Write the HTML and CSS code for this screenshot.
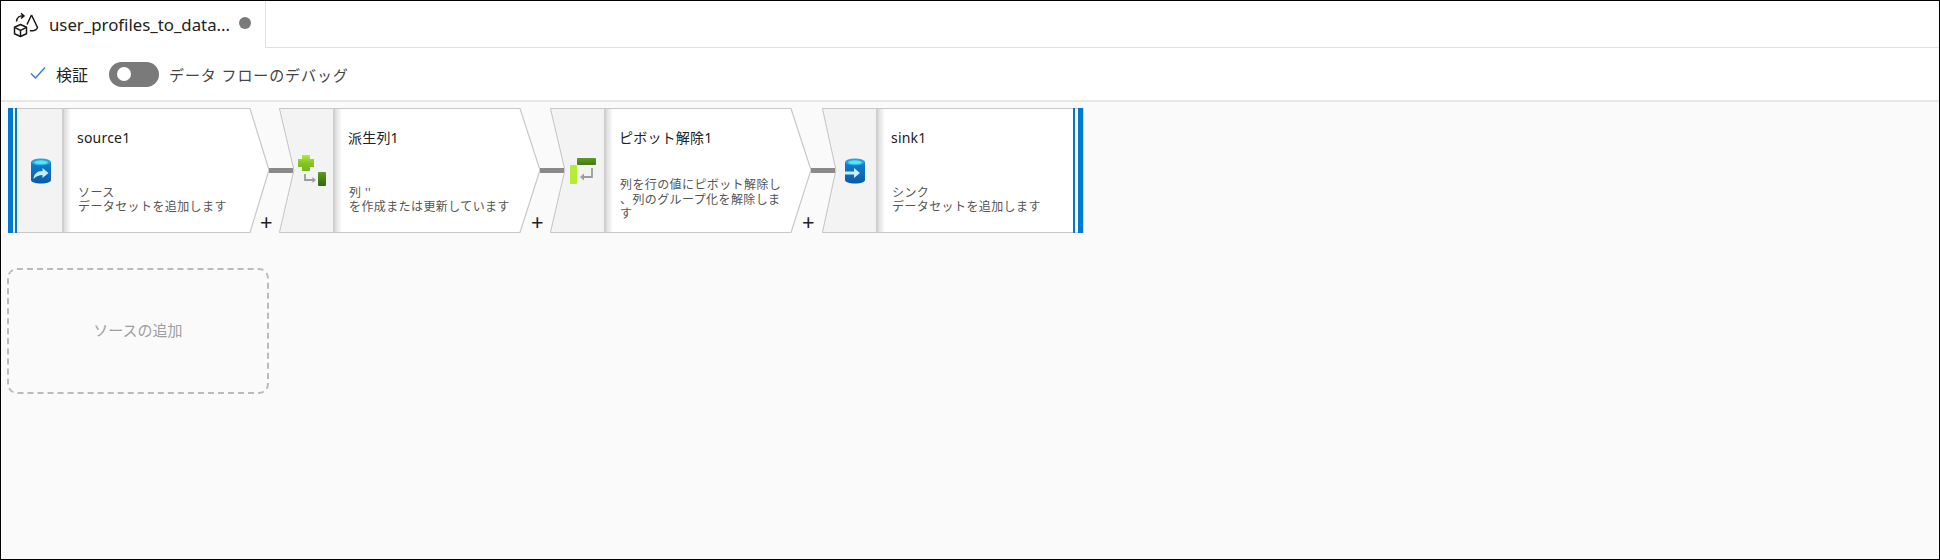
FILE: index.html
```html
<!DOCTYPE html>
<html lang="ja">

<head>
    <meta charset="UTF-8">
    <title>user_profiles_to_data</title>
    <link rel="stylesheet" href="styles.css">
</head>

<body>
    <div class="frame">
        <div class="tabbar">
            <div class="tab">
                <svg class="tab-icon" width="26" height="26" viewBox="0 0 26 26" fill="none" stroke="#1d1815" stroke-width="1.5">
                    <path d="M7.500 12.500l6 2.800v6.400l-6 2.800-6-2.800v-6.400z" stroke-linejoin="round"/>
                    <path d="M1.500 15.300l6 3 6-3M7.500 18.300v6.400"/>
                    <path d="M18.500 3l6 12.500c-1 2.500-3 3.200-5 3.200h-2.600M18.500 3l-4.500 9.500"/>
                    <path d="M3.500 9.500c.4-3.600 3-6 7-5.600M8 1.200l3 2.700-3 2.600"/>
                </svg>
                <span class="tab-title">user_profiles_to_data...</span>
                <span class="tab-dot"></span>
            </div>
            <div class="tab-rest"></div>
        </div>

        <div class="toolbar">
            <svg class="check" width="16" height="14" viewBox="0 0 16 14" fill="none" stroke="#2f78d0" stroke-width="1.3">
                <path d="M1 7.500l4.500 4.500L15 1.500"/>
            </svg>
            <span class="validate">検証</span>
            <span class="toggle"><span class="knob"></span></span>
            <span class="debug">データ フローのデバッグ</span>
        </div>

        <div class="canvas">
            <div class="pipeline">
                <div class="node node-first">
                    <svg class="shape" width="262" height="125" viewBox="0 0 262 125">
                        <polygon points="0.5,0.5 242,0.5 261,62 242,124.5 0.5,124.5" fill="#fff" stroke="#c8c8c8" stroke-width="1.2"/>
                        <polygon points="1,1 54,1 54,124 1,124" fill="#f3f3f3"/>
                        <rect x="54" y="1" width="2" height="123" fill="#cfcfcf"/>
                        <rect x="0" y="0" width="5" height="125" fill="#0078d4"/>
                        <rect x="7" y="0" width="2" height="125" fill="#0078d4"/>
                    </svg>
                    <div class="strip">
                        <svg width="22" height="26" viewBox="0 0 22 26">
                            <path d="M1 4v18c0 2 4.500 3.500 10 3.500s10-1.500 10-3.500V4z" fill="url(#db1)"/>
                            <ellipse cx="11" cy="4" rx="10" ry="3.500" fill="#2a9fd8"/>
                            <ellipse cx="11" cy="4.300" rx="7" ry="2" fill="#50e6ff"/>
                            <path d="M3.500 21c.3-5 3.500-8 9-8V10l6 5-6 5v-3c-3.500 0-6 1-9 4z" fill="#c8eefc"/>
                            <defs>
                                <linearGradient id="db1" x1="0" y1="0" x2="0" y2="1">
                                    <stop offset="0" stop-color="#0f7fd6"/>
                                    <stop offset="1" stop-color="#0a5ba8"/>
                                </linearGradient>
                            </defs>
                        </svg>
                    </div>
                    <div class="body">
                        <div class="title">source1</div>
                        <div class="desc">ソース<br>データセットを追加します</div>
                    </div>
                    <span class="link"></span>
                    <span class="plus">+</span>
                </div>

                <div class="node">
                    <svg class="shape" width="262" height="125" viewBox="0 0 262 125">
                        <polygon points="0.5,0.5 241,0.5 261,62 241,124.5 0.5,124.5 15,62" fill="#fff" stroke="#c8c8c8" stroke-width="1.2"/>
                        <polygon points="1.500,1 54,1 54,124 1.500,124 16,62" fill="#f3f3f3"/>
                        <rect x="54" y="1" width="2" height="123" fill="#cfcfcf"/>
                    </svg>
                    <div class="strip">
                        <svg width="30" height="32" viewBox="0 0 30 32">
                            <path d="M5 0h8v4h4v8h-4v4H5v-4H1V4h4z" fill="url(#plus1)"/>
                            <rect x="21" y="17" width="8" height="14" rx="1" fill="url(#col1)"/>
                            <path d="M8 19v6h9" fill="none" stroke="#9c9c9c" stroke-width="1.800"/>
                            <path d="M15.500 22l3.500 3-3.500 3z" fill="#9c9c9c"/>
                            <defs>
                                <linearGradient id="plus1" x1="0" y1="0" x2="0" y2="1">
                                    <stop offset="0" stop-color="#b4ec36"/>
                                    <stop offset="0.500" stop-color="#86c522"/>
                                    <stop offset="1" stop-color="#74b81c"/>
                                </linearGradient>
                                <linearGradient id="col1" x1="0" y1="0" x2="0" y2="1">
                                    <stop offset="0" stop-color="#5e9a24"/>
                                    <stop offset="1" stop-color="#2f6a10"/>
                                </linearGradient>
                            </defs>
                        </svg>
                    </div>
                    <div class="body">
                        <div class="title">派生列1</div>
                        <div class="desc">列 ''<br>を作成または更新しています</div>
                    </div>
                    <span class="link"></span>
                    <span class="plus">+</span>
                </div>

                <div class="node">
                    <svg class="shape" width="262" height="125" viewBox="0 0 262 125">
                        <polygon points="0.5,0.5 241,0.5 261,62 241,124.5 0.5,124.5 15,62" fill="#fff" stroke="#c8c8c8" stroke-width="1.2"/>
                        <polygon points="1.500,1 54,1 54,124 1.500,124 16,62" fill="#f3f3f3"/>
                        <rect x="54" y="1" width="2" height="123" fill="#cfcfcf"/>
                    </svg>
                    <div class="strip">
                        <svg width="26" height="26" viewBox="0 0 26 26">
                            <rect x="7" y="0" width="19" height="7" rx="1" fill="url(#bar1)"/>
                            <rect x="0" y="7" width="7" height="19" rx="1" fill="#b4ec36"/>
                            <path d="M22 10v9H12" fill="none" stroke="#9c9c9c" stroke-width="1.800"/>
                            <path d="M14 15.500l-4 3.500 4 3.500z" fill="#9c9c9c"/>
                            <defs>
                                <linearGradient id="bar1" x1="0" y1="0" x2="0" y2="1">
                                    <stop offset="0" stop-color="#5e9a24"/>
                                    <stop offset="1" stop-color="#3f7a15"/>
                                </linearGradient>
                            </defs>
                        </svg>
                    </div>
                    <div class="body">
                        <div class="title">ピボット解除1</div>
                        <div class="desc">列を行の値にピボット解除し<br>、列のグループ化を解除しま<br>す</div>
                    </div>
                    <span class="link"></span>
                    <span class="plus">+</span>
                </div>

                <div class="node node-last">
                    <svg class="shape" width="262" height="125" viewBox="0 0 262 125">
                        <polygon points="0.5,0.5 261,0.5 261,124.5 0.5,124.5 14,62" fill="#fff" stroke="#c8c8c8" stroke-width="1.2"/>
                        <polygon points="1.500,1 54,1 54,124 1.500,124 15,62" fill="#f3f3f3"/>
                        <rect x="54" y="1" width="2" height="123" fill="#cfcfcf"/>
                        <rect x="251" y="0" width="2" height="125" fill="#0078d4"/>
                        <rect x="256" y="0" width="5" height="125" fill="#0078d4"/>
                    </svg>
                    <div class="strip">
                        <svg width="22" height="26" viewBox="0 0 22 26">
                            <path d="M1 4v18c0 2 4.500 3.500 10 3.500s10-1.500 10-3.500V4z" fill="url(#db2)"/>
                            <ellipse cx="11" cy="4" rx="10" ry="3.500" fill="#2a9fd8"/>
                            <ellipse cx="11" cy="4.300" rx="7" ry="2" fill="#50e6ff"/>
                            <path d="M1 13.500h9V10l6 5-6 5v-3.500H1z" fill="#c8eefc"/>
                            <defs>
                                <linearGradient id="db2" x1="0" y1="0" x2="0" y2="1">
                                    <stop offset="0" stop-color="#0f7fd6"/>
                                    <stop offset="1" stop-color="#0a5ba8"/>
                                </linearGradient>
                            </defs>
                        </svg>
                    </div>
                    <div class="body">
                        <div class="title">sink1</div>
                        <div class="desc">シンク<br>データセットを追加します</div>
                    </div>
                </div>
            </div>

            <div class="add-source">ソースの追加</div>
        </div>
    </div>
</body>

</html>
```

FILE: styles.css
```css
html,
body {
    margin: 0;
    padding: 0;
}

body {
    font-family: "Noto Sans", "Noto Sans CJK JP", sans-serif;
    color: #222;
}

.frame {
    width: 1940px;
    height: 560px;
    box-sizing: border-box;
    border: 1px solid #000;
    display: flex;
    flex-direction: column;
    overflow: hidden;
    background-color: #fff;
}

.tabbar {
    display: flex;
    height: 47px;
}

.tab {
    width: 265px;
    box-sizing: border-box;
    display: flex;
    align-items: center;
    padding-left: 12px;
    border-right: 1px solid #e0e0e0;
}

.tab-icon {
    flex: none;
}

.tab-title {
    margin-left: 10px;
    font-size: 16.8px;
    white-space: nowrap;
}

.tab-dot {
    width: 12px;
    height: 12px;
    margin-left: 9px;
    margin-top: -3px;
    border-radius: 50%;
    background-color: #7a7a7a;
}

.tab-rest {
    flex: 1;
    border-bottom: 1px solid #e0e0e0;
}

.toolbar {
    height: 54px;
    box-sizing: border-box;
    display: flex;
    align-items: center;
    padding-left: 29px;
    border-bottom: 2px solid #e6e6e6;
}

.check {
    margin-top: -2px;
}

.validate {
    margin-left: 10px;
    font-size: 16px;
}

.toggle {
    width: 50px;
    height: 25px;
    margin-left: 21px;
    display: flex;
    align-items: center;
    padding-left: 8px;
    box-sizing: border-box;
    border-radius: 13px;
    background-color: #7a7a7a;
}

.knob {
    width: 14px;
    height: 14px;
    border-radius: 50%;
    background-color: #fff;
}

.debug {
    margin-left: 10px;
    font-size: 15px;
    letter-spacing: 0.9px;
    color: #444;
}

.canvas {
    flex: 1;
    background-color: #fafafa;
    padding: 6px 0 0 7px;
}

.pipeline {
    display: flex;
    height: 125px;
}

.node {
    position: relative;
    z-index: 0;
    width: 271px;
    height: 125px;
    display: flex;
    flex: none;
}

.node:nth-child(3) {
    width: 272px;
}

.node-last {
    width: 262px;
}

.shape {
    position: absolute;
    left: 0;
    top: 0;
    z-index: -1;
}

.strip {
    width: 56px;
    box-sizing: border-box;
    padding-left: 10px;
    display: flex;
    flex: none;
    align-items: center;
    justify-content: center;
}

.body {
    width: 190px;
    margin: 1px 0;
    padding-left: 13px;
    box-sizing: border-box;
    background: linear-gradient(90deg, #dcdcdc, #fff) no-repeat;
    background-size: 7px 100%;
}

.title {
    margin-top: 19px;
    font-size: 14px;
    line-height: 20px;
    letter-spacing: 0.2px;
    white-space: nowrap;
}

.desc {
    height: 50px;
    margin: 27px 0 0 1px;
    display: flex;
    flex-direction: column;
    justify-content: center;
    font-size: 12px;
    line-height: 14.5px;
    letter-spacing: 0.4px;
    white-space: nowrap;
    color: #555;
}

.link {
    position: absolute;
    left: 261px;
    top: 60px;
    width: 24px;
    height: 5px;
    background-color: #8a8a8a;
}

.plus {
    position: absolute;
    left: 252px;
    top: 100px;
    font-size: 22px;
    line-height: 26px;
    color: #222;
}

.add-source {
    width: 262px;
    height: 126px;
    box-sizing: border-box;
    margin: 35px 0 0 -1px;
    padding-bottom: 4px;
    display: flex;
    align-items: center;
    justify-content: center;
    border: 2px dashed #bbb;
    border-radius: 10px;
    font-size: 15px;
    color: #a0a0a0;
}
```
